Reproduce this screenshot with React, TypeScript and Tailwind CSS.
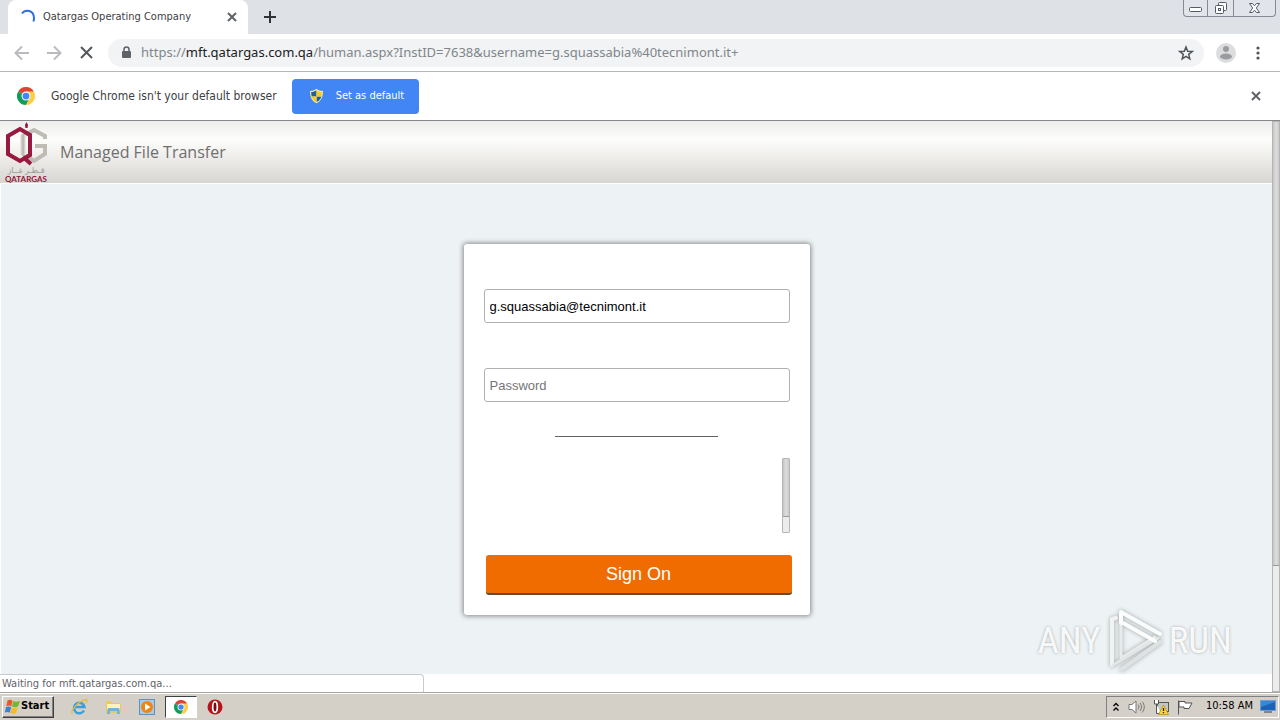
import { useState } from "react";

function ChromeLogo({ size }: { size: number }) {
  return (
    <svg width={size} height={size} viewBox="0 0 48 48" aria-hidden="true">
      <path d="M24 24 3.2 12A24 24 0 0 1 44.8 12Z" fill="#dd4437" />
      <path d="M24 24 3.2 12A24 24 0 0 0 24 48L34 30Z" fill="#109d59" />
      <path d="M24 12H44.8A24 24 0 0 1 24 48L34.4 30Z" fill="#ffcd42" />
      <circle cx="24" cy="24" r="12" fill="#f4f6f8" />
      <circle cx="24" cy="24" r="9" fill="#4386f5" />
    </svg>
  );
}

function Cross({ size, color, width }: { size: number; color: string; width: number }) {
  return (
    <svg width={size} height={size} viewBox={`0 0 ${size} ${size}`} fill="none" stroke={color} strokeWidth={width} aria-hidden="true">
      <path d={`M1 1 ${size - 1} ${size - 1}M${size - 1} 1 1 ${size - 1}`} />
    </svg>
  );
}

function ShieldIcon() {
  return (
    <svg width="15" height="16" viewBox="0 0 15 16" aria-hidden="true">
      <path d="M7.500 .8C5.500 2.500 3.500 3 1 3c0 5 1 9.500 6.500 12.300C13 12.500 14 8 14 3 11.500 3 9.500 2.500 7.500.8Z" fill="#f3e6a0" />
      <path d="M7.500 2.200C6 3.300 4.200 4 2.200 4c0 1.600.1 3 .5 4.500h4.800ZM7.500 8.500v5.600c2.800-1.300 4.200-3.300 4.800-5.600Z" fill="#1c5fa8" />
      <path d="M7.500 2.200c1.500 1.100 3.300 1.800 5.300 1.800 0 1.600-.1 3-.5 4.500H7.500ZM7.500 8.500v5.600c-2.800-1.300-4.200-3.300-4.800-5.600Z" fill="#f7c927" />
    </svg>
  );
}

function WindowButtons() {
  return (
    <div className="flex h-[17px] rounded-b border border-t-0 border-[#858a94] bg-[#e1e4e9] text-[#555b66]">
      <button aria-label="Minimize" className="flex w-6 items-center justify-center border-r border-[#858a94] pt-1">
        <svg width="13" height="6" viewBox="0 0 13 6">
          <rect x=".5" y=".5" width="12" height="4" rx="1" fill="#fff" stroke="currentColor" />
        </svg>
      </button>
      <button aria-label="Restore" className="flex w-[26px] items-center justify-center border-r border-[#858a94]">
        <svg width="14" height="14" viewBox="0 0 14 14" fill="#fff" stroke="currentColor">
          <rect x="4.500" y="1.500" width="8" height="8" rx="1" />
          <rect x="1.500" y="4.500" width="8" height="8" rx="1" />
          <rect x="4.500" y="7.500" width="2" height="2" />
        </svg>
      </button>
      <button aria-label="Close" className="flex w-[41px] items-center justify-center">
        <svg width="13" height="12" viewBox="0 0 13 12" fill="#fff" stroke="currentColor">
          <path d="M1.500 1.500h3l2 2.300 2-2.300h3L8.300 6l3.200 4.500h-3l-2-2.300-2 2.300h-3L4.700 6Z" />
        </svg>
      </button>
    </div>
  );
}

function TabStrip() {
  return (
    <div className="flex h-[34px] items-start bg-[#dee1e6] pl-2 pr-1">
      <div className="flex h-[34px] w-60 items-center rounded-t-lg bg-white pl-3 pr-[11px]">
        <svg width="16" height="16" viewBox="0 0 16 16" fill="none" stroke="#2f6fdc" strokeWidth="2" aria-hidden="true">
          <path d="M2 4.500C5 .5 14 0 14 9.500c0 1-.2 2-.6 3" />
        </svg>
        <span className="ml-[7px] grow whitespace-nowrap text-[11px] text-[#3c4043]">Qatargas Operating Company</span>
        <button aria-label="Close tab">
          <Cross size={10} color="#5f6368" width={2} />
        </button>
      </div>
      <button aria-label="New tab" className="ml-4 mt-[11px]">
        <svg width="12" height="12" viewBox="0 0 12 12" stroke="#303336" strokeWidth="2">
          <path d="M6 0v12M0 6h12" />
        </svg>
      </button>
      <div className="grow" />
      <WindowButtons />
    </div>
  );
}

function Toolbar() {
  return (
    <div className="flex h-[38px] items-center border-b border-[#b4b6b9] bg-white pl-[14px] pr-5">
      <button aria-label="Back">
        <svg width="16" height="16" viewBox="0 0 16 16" fill="none" stroke="#b9bbbe" strokeWidth="2">
          <path d="M15 8H2M8 1.500 1.500 8 8 14.500" />
        </svg>
      </button>
      <button aria-label="Forward" className="ml-4">
        <svg width="16" height="16" viewBox="0 0 16 16" fill="none" stroke="#b9bbbe" strokeWidth="2">
          <path d="M1 8h13M8 1.500 14.500 8 8 14.500" />
        </svg>
      </button>
      <button aria-label="Stop loading" className="ml-[18px]">
        <Cross size={13} color="#54585c" width={2} />
      </button>
      <div className="ml-[15px] flex h-7 grow items-center rounded-full bg-[#f1f3f4] pl-3 pr-[10px]">
        <svg width="12" height="14" viewBox="0 0 12 14" aria-hidden="true">
          <rect x="2" y="5" width="9" height="7" rx="1" fill="#5f6368" />
          <path d="M4 5.500V3.600a2.500 2.500 0 0 1 5 0v1.900" fill="none" stroke="#5f6368" strokeWidth="1.500" />
        </svg>
        <div className="ml-[9px] grow whitespace-nowrap font-['Noto_Sans',sans-serif] text-[13px] text-[#80868b]">
          https://<span className="text-[#202124]">mft.qatargas.com.qa</span>/human.aspx?InstID=7638&amp;username=g.squassabia%40tecnimont.it+
        </div>
        <button aria-label="Bookmark this page">
          <svg width="16" height="16" viewBox="0 0 16 16" fill="none" stroke="#505459" strokeWidth="1.500">
            <path d="m8 2 1.700 4.200 4.500.3-3.500 2.900 1.100 4.400L8 11.400l-3.800 2.400 1.100-4.400-3.500-2.900 4.500-.3Z" />
          </svg>
        </button>
      </div>
      <button aria-label="Profile" className="ml-3">
        <svg width="20" height="20" viewBox="0 0 20 20">
          <circle cx="10" cy="10" r="10" fill="#dcdddf" />
          <circle cx="10" cy="6" r="3" fill="#9a9c9f" />
          <ellipse cx="10" cy="13.500" rx="6" ry="3" fill="#9a9c9f" />
        </svg>
      </button>
      <button aria-label="Menu" className="ml-5">
        <svg width="4" height="14" viewBox="0 0 4 14" fill="#505357">
          <circle cx="2" cy="2" r="1.600" />
          <circle cx="2" cy="7" r="1.600" />
          <circle cx="2" cy="12" r="1.600" />
        </svg>
      </button>
    </div>
  );
}

function DefaultBrowserBar() {
  return (
    <div className="flex h-12 items-center bg-white pl-[17px] pr-[19px]">
      <ChromeLogo size={18} />
      <span className="ml-4 whitespace-nowrap text-[12px] text-[#3c4043]">Google Chrome isn't your default browser</span>
      <button className="ml-[15px] flex h-[35px] w-[127px] items-center rounded bg-[#4285f4] pl-[17px] text-[11px] text-white">
        <ShieldIcon />
        <span className="ml-3 whitespace-nowrap">Set as default</span>
      </button>
      <div className="grow" />
      <button aria-label="Dismiss">
        <Cross size={10} color="#5f6368" width={2} />
      </button>
    </div>
  );
}

function QatargasLogo() {
  return (
    <svg width="44" height="62" viewBox="0 0 44 62" aria-hidden="true">
      <path d="M22.500 1 24 4l-.5 3h-2L21 4Z" fill="#8f1838" />
      <g fill="none" strokeWidth="4">
        <path d="M41 18v-3L30 9 19 15v18l11 7 11-7V25H31" stroke="#bfbbb5" />
        <path d="M19 14v20" stroke="#e9e7e4" strokeWidth="6" />
        <path d="M19 14v20" stroke="#bfbbb5" strokeWidth="3" />
        <path d="M16 8 4 15v18l12 7 10-6V14Z" stroke="#981a40" />
        <path d="M19 36 27 43" stroke="#981a40" />
      </g>
      <text x="22" y="52" textAnchor="middle" fontSize="8" fill="#9b9793" fontFamily="DejaVu Sans, sans-serif">قـطـر غــاز</text>
      <text x="22" y="61" textAnchor="middle" fontSize="8" fontWeight="700" fill="#8f1838" fontFamily="Lato, sans-serif">QATARGAS</text>
    </svg>
  );
}

function SignOnCard() {
  const [username, setUsername] = useState("g.squassabia@tecnimont.it");
  const [password, setPassword] = useState("");
  const field =
    "block h-[34px] w-full rounded-[3px] border border-[#b0b0b0] bg-white px-[5px] text-[13px] text-black outline-none placeholder:text-[#757575]";

  return (
    <form
      onSubmit={(e) => e.preventDefault()}
      className="mx-auto w-[346px] rounded-[3px] bg-white px-5 pb-5 pt-[45px] font-['Liberation_Sans',Arial,sans-serif] shadow-[0_0_5px_1px_#888]"
    >
      <input aria-label="Username" className={field} value={username} onChange={(e) => setUsername(e.target.value)} />
      <input
        aria-label="Password"
        type="password"
        placeholder="Password"
        className={`${field} mt-[45px]`}
        value={password}
        onChange={(e) => setPassword(e.target.value)}
      />
      <hr className="mx-auto mt-[34px] w-[163px] border-t border-[#606468]" />
      <div className="mt-[21px] flex h-[75px] justify-end">
        <div className="w-2 rounded-[1px] border border-[#b5b5b5] bg-[#ececec]">
          <div className="h-[58px] border-b border-[#999] bg-linear-to-r from-[#c4c4c4] via-[#dedede] to-[#cacaca]" />
        </div>
      </div>
      <button className="ml-[2px] mt-[22px] block h-10 w-full rounded-[3px] border-b-2 border-[#6b4a2c] bg-[#f06c00] text-[18px] text-white">
        Sign On
      </button>
    </form>
  );
}

function Watermark() {
  return (
    <div className="pointer-events-none absolute bottom-0 right-10 flex items-center font-['Roboto_Condensed','Liberation_Sans_Narrow','Liberation_Sans',sans-serif] text-[37px] text-white/90 [text-shadow:0_0_3px_#a4a8aa]">
      <span>ANY</span>
      <svg width="60" height="66" viewBox="0 0 60 66" fill="none" strokeLinejoin="round" strokeLinecap="round" className="mx-1 drop-shadow-[0_0_2px_#a0a4a6]">
        <path d="M16 4v46L50 29" stroke="#e9ebeb" strokeWidth="3" />
        <path d="M55 34 17 61" stroke="#dfe2e2" strokeWidth="4" />
        <path d="M7 57V11l4-1" stroke="#f1f3f3" strokeWidth="4" />
        <path d="M8 57 53 30" stroke="#e3e6e6" strokeWidth="3" />
        <path d="M16 15v-11L55 26M18 15 50 33" stroke="#fbfcfc" strokeWidth="4" />
      </svg>
      <span>RUN</span>
    </div>
  );
}

function PageScrollbar() {
  return (
    <div className="flex w-2 flex-col border border-[#b5b5b5] bg-[#ececec]">
      <div className="h-[78%] border-b border-[#999] bg-linear-to-r from-[#c4c4c4] via-[#dedede] to-[#cacaca]" />
    </div>
  );
}

function StartFlag() {
  return (
    <svg width="17" height="16" viewBox="0 0 16 16" aria-hidden="true">
      <path d="M3 1.500c2-1 3.300-.8 5 .2L6.800 7.300c-1.800-1-3.300-1-5-.2Z" fill="#e45b25" />
      <path d="M8.700 2c1.800 1 3.500 1 6.800 0l-2 5.500c-2 1-4 1-6 0Z" fill="#75b82c" />
      <path d="M1.600 8c1.800-.8 3.300-.8 5 .2l-1.300 5.600c-1.600-1-3.200-1-5-.2Z" fill="#3a82d4" />
      <path d="M7.300 8.500c1.800 1 3.600 1 6 0L11.700 14c-2 1-3.800 1-5.700 0Z" fill="#f4bd20" />
    </svg>
  );
}

function Taskbar() {
  const launcher = "flex h-[22px] w-8 items-center justify-center";
  return (
    <div className="flex h-7 items-center border-t border-[#a9a69f] bg-[#d4d0c8] pl-[2px] pr-px shadow-[inset_0_1px_0_#fff]">
      <button className="flex h-[22px] w-[52px] items-center border border-b-[#404040] border-l-white border-r-[#404040] border-t-white pl-px font-['DejaVu_Sans_Condensed','DejaVu_Sans',sans-serif] text-[11px] font-bold text-black shadow-[inset_-1px_-1px_0_#808080]">
        <StartFlag />
        Start
      </button>
      <div className="ml-[9px] flex items-center gap-[2px]">
        <button aria-label="Internet Explorer" className={launcher}>
          <svg width="18" height="18" viewBox="0 0 18 18" fill="none">
            <path d="M14 12.500A5.300 5.300 0 1 1 14.500 9H5" stroke="#39a0df" strokeWidth="2.500" />
            <path d="M2.500 16C-1 14 8 3 16 1.500c1.500 0 1 2 0 3.500" stroke="#e6b93d" strokeWidth="1.300" />
          </svg>
        </button>
        <button aria-label="File Explorer" className={launcher}>
          <svg width="17" height="16" viewBox="0 0 17 16">
            <path d="M1 2h5l1 2h9v10H1Z" fill="#ecc95b" />
            <path d="M2 5h13v5H2Z" fill="#fff3b5" />
            <path d="M3 9h11l1 6h-3v-3H5v3H2Z" fill="#6fb4dc" />
          </svg>
        </button>
        <button aria-label="Media Player" className={launcher}>
          <svg width="16" height="16" viewBox="0 0 16 16">
            <rect x=".5" y=".5" width="15" height="15" fill="#a7cae9" stroke="#5f91c2" />
            <circle cx="8" cy="8" r="6" fill="#ef8512" />
            <path d="m6 4.500 5.500 3.500L6 11.500Z" fill="#fff" />
          </svg>
        </button>
        <button
          aria-label="Google Chrome"
          className="flex h-[22px] w-8 items-center justify-center border border-b-white border-l-[#404040] border-r-white border-t-[#404040] bg-white"
        >
          <ChromeLogo size={14} />
        </button>
        <button aria-label="Opera" className={launcher}>
          <svg width="16" height="16" viewBox="0 0 16 16">
            <circle cx="8" cy="8" r="7.500" fill="#b5141a" />
            <ellipse cx="8" cy="8" rx="2.300" ry="5.300" fill="#7a0a0e" stroke="#fff" strokeWidth="1.700" />
          </svg>
        </button>
      </div>
      <div className="grow" />
      <div className="flex h-[22px] items-center border border-b-white border-l-[#808080] border-r-white border-t-[#808080] pl-[6px] pr-[2px]">
        <svg width="6" height="10" viewBox="0 0 6 10" fill="none" stroke="#000" strokeWidth="1.300" aria-hidden="true">
          <path d="m.5 4 2.500-2.500L5.500 4M.5 8.500 3 6l2.500 2.500" />
        </svg>
        <svg width="17" height="16" viewBox="0 0 17 16" fill="none" stroke="#777" className="ml-[9px]" aria-hidden="true">
          <path d="M1 5.500h3L8 2v12L4 10.500H1Z" fill="#fff" />
          <path d="M10 5.500c1.200 1.500 1.200 3.500 0 5M12 4c2 2.300 2 5.700 0 8M14 2.500c3 3 3 8 0 11" />
        </svg>
        <svg width="16" height="16" viewBox="0 0 16 16" className="ml-2" aria-hidden="true">
          <rect x="4.500" y="3.500" width="11" height="9" fill="#c4c6c4" stroke="#555" />
          <path d="M1.500 1v4h4V1M3.500 5v9.500H8" fill="#fff" stroke="#555" />
          <path d="m10.500 6 5 9.500h-10Z" fill="#ffd52e" stroke="#ad8b11" strokeWidth=".7" />
          <path d="M10.500 9v3M10.500 13v1.200" stroke="#222" strokeWidth="1.300" />
        </svg>
        <svg width="17" height="16" viewBox="0 0 17 16" className="ml-2" fill="#fff" stroke="#555" aria-hidden="true">
          <path d="M1.500 1.500v14M2 2.500h6v1.500h7l-3 5.500H7V8H2Z" />
        </svg>
        <span className="ml-3 whitespace-nowrap text-[11px] text-black">10:58 AM</span>
        <svg width="16" height="13" viewBox="0 0 16 13" className="ml-[7px]" aria-hidden="true">
          <rect x=".5" y=".5" width="15" height="10" fill="#1d62b8" stroke="#6e9dce" />
          <path d="M1 7 15 2v-1H1Z" fill="#3988d8" />
          <path d="M4 12h8" stroke="#353a40" />
        </svg>
      </div>
    </div>
  );
}

export default function App() {
  return (
    <div className="flex min-h-screen flex-col bg-white font-['DejaVu_Sans_Condensed','Noto_Sans',sans-serif]">
      <TabStrip />
      <Toolbar />
      <DefaultBrowserBar />
      <div className="flex grow border-t border-[#85878a]">
        <div className="flex grow flex-col">
          <header className="flex h-[62px] items-center bg-linear-to-b from-[#ededeb] via-[#fdfdfb] via-30% to-[#d8d6d3] pl-1">
            <QatargasLogo />
            <h1 className="ml-3 font-['Open_Sans','Noto_Sans',sans-serif] text-[16px] text-[#6f6f6f]">Managed File Transfer</h1>
          </header>
          <main className="relative grow border-l border-t border-white bg-[#edf2f4] pt-[60px]">
            <SignOnCard />
            <Watermark />
          </main>
          <div className="h-[18px] bg-white">
            <div className="h-full w-1/3 rounded-tr border-r border-t border-[#c8cacc] pl-[2px] text-[11px] leading-[18px] text-[#5f6368]">
              Waiting for mft.qatargas.com.qa...
            </div>
          </div>
        </div>
        <PageScrollbar />
      </div>
      <Taskbar />
    </div>
  );
}
